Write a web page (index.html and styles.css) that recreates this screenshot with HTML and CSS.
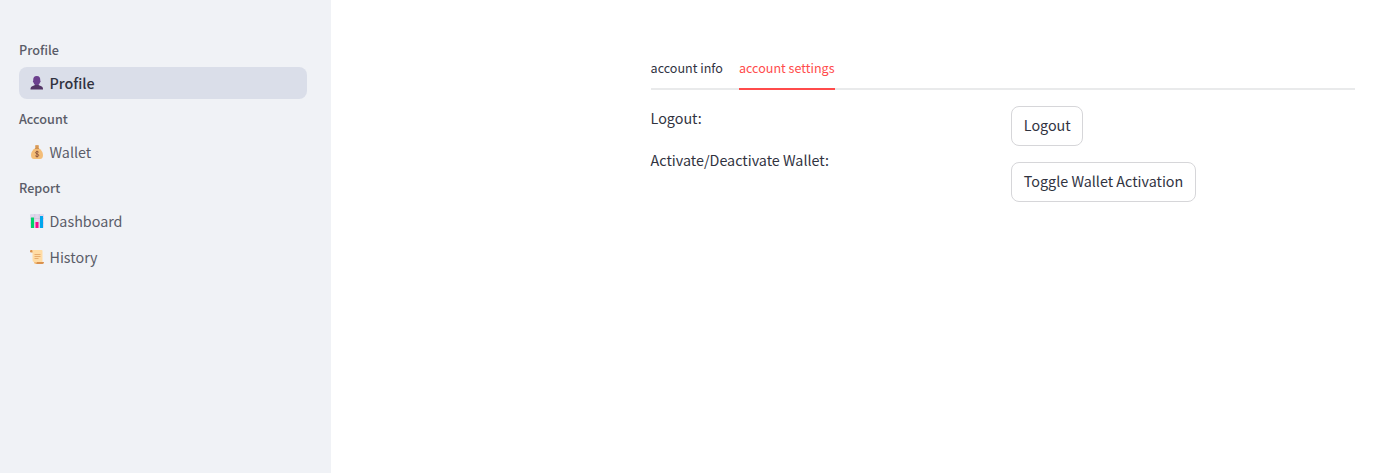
FILE: index.html
```html
<!DOCTYPE html>
<html lang="en">
<head>
<meta charset="utf-8">
<title>Profile</title>
<link rel="stylesheet" href="styles.css">
</head>
<body>
<div class="app">
  <nav class="sidebar">
    <section class="group">
      <h2 class="group-title">Profile</h2>
      <a class="nav-item active">
        <svg class="icon" viewBox="0 0 28 28"><path fill="#6b3f8d" d="M13.500 0C8 0 6 4 6.500 9C5.300 9.500 5.500 12.500 7 13C7.800 15.500 9 17 10 18V21H17V18C18 17 19.200 15.500 20 13C21.500 12.500 21.700 9.500 20.500 9C21 4 19 0 13.500 0Z"/><path fill="#533566" d="M10 18L3.500 21C1.500 22 1 24 1 27H26C26 24 25.500 22 23.500 21L17 18Z"/></svg>
        <span>Profile</span>
      </a>
    </section>
    <section class="group">
      <h2 class="group-title">Account</h2>
      <a class="nav-item">
        <svg class="icon" viewBox="0 0 28 28"><path fill="#d99a56" d="M10 1Q14-1 18 1L17 6H11Z"/><path fill="#f3bd78" d="M11 6H17C22 9 26 14 26 20C26 25 24 28 20 28H8C4 28 2 25 2 20C2 14 6 9 11 6Z"/><path stroke="#c78647" stroke-width="2" d="M10 6.500H18"/><path fill="none" stroke="#7d4533" stroke-width="1.600" d="M17.500 14.500C16 12.500 11 12.500 11 15.500C11 18.500 17.500 17 17.500 20.500C17.500 24 12 23.500 10.500 21.500M14 11.500V25"/></svg>
        <span>Wallet</span>
      </a>
    </section>
    <section class="group">
      <h2 class="group-title">Report</h2>
      <a class="nav-item">
        <svg class="icon" viewBox="0 0 28 28"><rect width="28" height="28" rx="2" fill="#e1d8ec"/><path stroke="#c9bdd7" stroke-width="1" d="M0 9H28M0 18H28M9.500 0V28M18.500 0V28"/><path fill="#00d26a" d="M2 7H8V28H2Z"/><path fill="#f70a8d" d="M11 16H17V28H11Z"/><path fill="#00a6ed" d="M20 4H26V28H20Z"/></svg>
        <span>Dashboard</span>
      </a>
      <a class="nav-item">
        <svg class="icon" viewBox="0 0 28 28"><path fill="#d9914e" d="M2 0H7V5H2Q0 5 0 2.500T2 0Z"/><path fill="#ffdca5" d="M4 0H23Q25 0 25 2V24H8Q5 24 5 20V4Q5 1 4 0Z"/><path stroke="#e6ad70" stroke-width="2" d="M9 9H21M9 13H21M9 17H17"/><path fill="#d9914e" d="M12 24H28Q28 28 25 28H12Z"/><path fill="#f3bd78" d="M8 24H14Q14 28 11 28Q8 28 8 24Z"/></svg>
        <span>History</span>
      </a>
    </section>
  </nav>
  <main class="main">
    <div class="tabs">
      <button class="tab">account info</button>
      <button class="tab selected">account settings</button>
    </div>
    <div class="columns">
      <div class="labels">
        <p>Logout:</p>
        <p>Activate/Deactivate Wallet:</p>
      </div>
      <div class="actions">
        <button class="btn">Logout</button>
        <button class="btn">Toggle Wallet Activation</button>
      </div>
    </div>
  </main>
</div>
</body>
</html>
```
FILE: styles.css
```css
* { box-sizing: border-box; }
body {
  margin: 0;
  background: #fff;
  color: #31333f;
  font-family: "Noto Sans CJK SC", "Noto Sans", sans-serif;
  font-size: 14.33px;
}
h2, p { margin: 0; }
button { font: inherit; color: inherit; background: none; border: 0; padding: 0; }
.app { display: flex; height: 473px; }
.sidebar { width: 331px; flex: none; background: #f0f2f6; padding: 33px 24px 0 19px; }
.group { margin-bottom: 3px; }
.group-title { height: 34px; line-height: 34px; font-size: 12.65px; font-weight: 500; color: #5a5c68; }
.nav-item {
  display: flex;
  align-items: center;
  gap: 5.5px;
  height: 32px;
  padding-left: 11px;
  border-radius: 8px;
  line-height: 32px;
  color: #5a5c68;
}
.nav-item + .nav-item { margin-top: 4px; }
.nav-item.active { background: #dadee9; color: #31333f; font-weight: 500; }
.icon { width: 14px; height: 14px; flex: none; }
.main { flex: 1; padding: 50px 37px 0 319.6px; }
.tabs { display: flex; gap: 16px; height: 40px; box-shadow: inset 0 -2px #e9eaeb; }
.tab { height: 40px; padding-bottom: 2px; font-size: 12.56px; line-height: 36px; border-bottom: 2px solid transparent; }
.tab.selected { color: #ff4b4b; border-color: #ff4b4b; }
.columns { display: grid; grid-template-columns: 1fr 1fr; gap: 16px; padding-top: 16px; }
.labels { display: flex; flex-direction: column; gap: 16px; line-height: 24px; }
.labels p { height: 26px; }
.actions { display: flex; flex-direction: column; align-items: flex-start; gap: 16px; }
.btn { height: 40px; padding: 0 11.6px 3px 12px; line-height: 34px; border: 1px solid #d6d6d9; border-radius: 8px; }
```
